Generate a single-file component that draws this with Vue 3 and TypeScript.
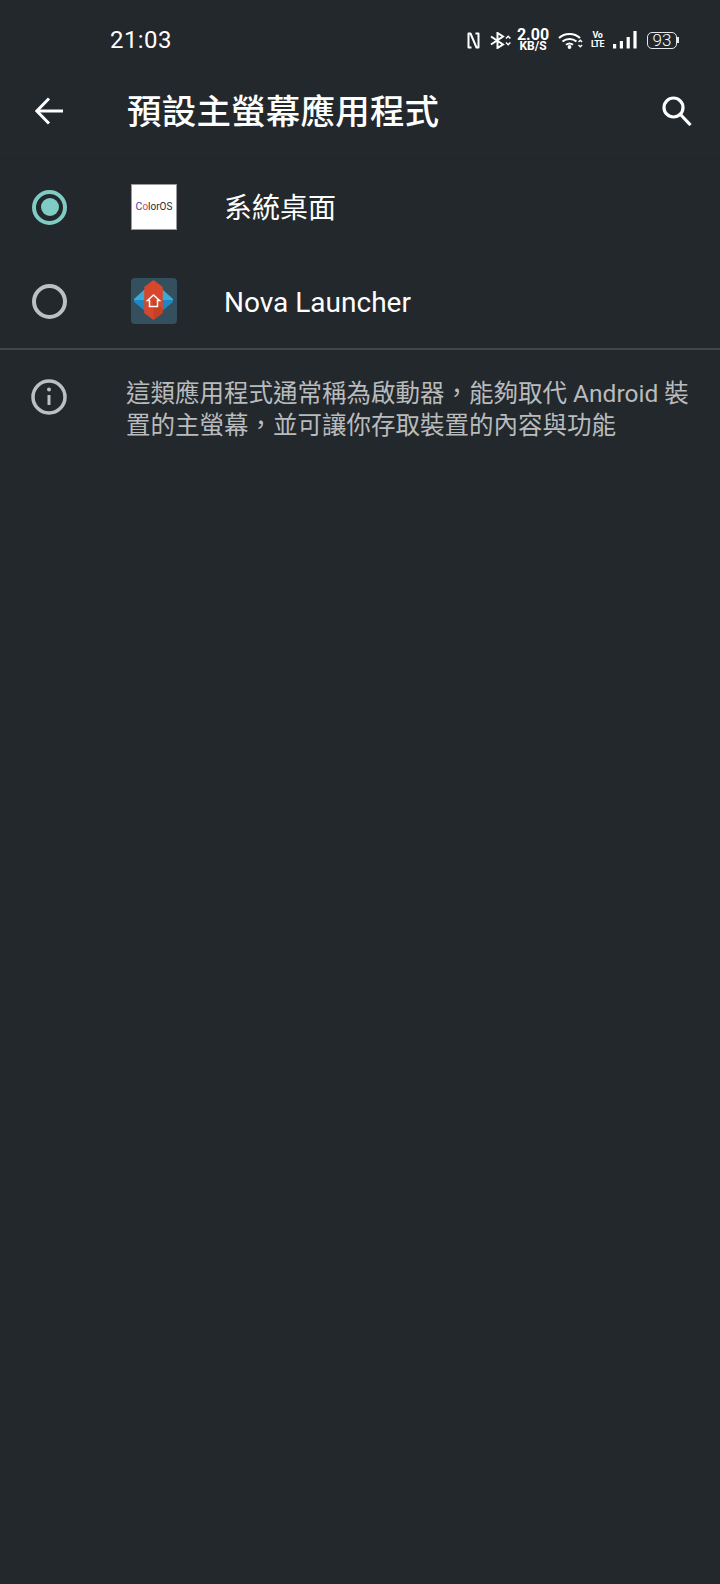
<script setup lang="ts">
const apps = [
	{ name: "系統桌面", selected: true, kind: "coloros" },
	{ name: "Nova Launcher", selected: false, kind: "nova" },
];
</script>

<template>
	<div class="screen">
		<div class="status">
			<span class="time">21:03</span>
			<div class="status-icons">
				<svg class="ic-nfc" width="13" height="17" viewBox="0 0 13 17" fill="none" stroke="#fff" stroke-width="2" stroke-linejoin="round">
					<path d="M4.500 15.500H1.500V1.500H3.500L9.500 15.500H11.500V1.500H8.500" />
				</svg>
				<svg class="ic-bt" width="21" height="17" viewBox="0 0 21 17" fill="none" stroke="#fff" stroke-width="2">
					<path d="M1 4.500l12 8-5.500 3.500V1L13 4.500l-12 8" />
					<path d="M16 6.500l2.200-2.200 2.200 2.200M16 10.500l2.200 2.200 2.200-2.200" stroke-width="1.500" />
				</svg>
				<div class="speed">
					<span class="speed-num">2.00</span>
					<span class="speed-unit">KB/S</span>
				</div>
				<svg class="ic-wifi" width="25" height="17" viewBox="0 0 25 17" fill="none" stroke="#fff" stroke-width="2">
					<path d="M1 6C6.500.5 16.500.5 22 6" />
					<path d="M4.500 9.500c4-3.500 10-3.500 14 0" />
					<path d="M8 12.800c2.300-1.700 4.700-1.700 7 0" />
					<circle cx="11.500" cy="15" r="1.900" fill="#fff" stroke="none" />
					<path d="M20.500 10l1.800-1.800L24.100 10M20.500 13l1.800 1.800L24.100 13" stroke-width="1.400" />
				</svg>
				<div class="volte">
					<span>Vo</span>
					<span>LTE</span>
				</div>
				<svg class="ic-signal" width="24" height="18" viewBox="0 0 24 18" fill="#fff">
					<rect x="0" y="13" width="3.200" height="4.500" />
					<rect x="6.800" y="10" width="3.200" height="7.500" />
					<rect x="13.600" y="6" width="3.200" height="11.500" />
					<rect x="20.400" y="0" width="3.200" height="17.500" />
				</svg>
				<div class="battery">
					<div class="battery-body">93</div>
					<div class="battery-tip"></div>
				</div>
			</div>
		</div>

		<header class="appbar">
			<svg class="back" width="28" height="28" viewBox="0 0 28 28" fill="none" stroke="#fff" stroke-width="3">
				<path d="M28 14H2" />
				<path d="M14 1.500L1.800 14 14 26.500" />
			</svg>
			<h1 class="title">預設主螢幕應用程式</h1>
			<svg class="search" width="30" height="30" viewBox="0 0 30 30" fill="none" stroke="#fff" stroke-width="3.200">
				<circle cx="11.500" cy="11.500" r="9.500" />
				<path d="M18 18l10.500 11" />
			</svg>
		</header>

		<div class="list">
			<div v-for="app in apps" :key="app.name" class="row">
				<div class="radio" :class="{ on: app.selected }">
					<div v-if="app.selected" class="dot"></div>
				</div>
				<div v-if="app.kind === 'coloros'" class="coloros">
					<span class="c1">C</span><span class="c2">o</span>lorOS
				</div>
				<svg v-else class="nova" width="46" height="46" viewBox="0 0 46 46">
					<rect width="46" height="46" rx="4" fill="#34505e" />
					<path d="M3 21l11-10v11H3z" fill="#3aa9dc" />
					<path d="M3 22h11v11L3 24z" fill="#1f86c2" />
					<path d="M42 21L31 11v11h11z" fill="#3aa9dc" />
					<path d="M42 22H31v11l11-9z" fill="#1f86c2" />
					<path d="M22.500 2l9.300 7v26l-9.300 7-9.300-7V9z" fill="#d6472b" />
					<path d="M22.500 22l9.300 9v4l-9.300 7z" fill="#b83a22" opacity="0.5" />
					<path d="M22.500 17l-6 5.500h2v6h8v-6h2z" fill="none" stroke="#fff" stroke-width="1.500" />
				</svg>
				<span class="name" :class="app.kind === 'coloros' ? 'name-cjk' : 'name-latin'">{{ app.name }}</span>
			</div>
		</div>

		<div class="info">
			<svg class="info-icon" width="36" height="36" viewBox="0 0 36 36" fill="none" stroke="#bdbfc0" stroke-width="3.500">
				<circle cx="18" cy="18" r="16" />
				<path d="M18 16v10" stroke-width="3" />
				<circle cx="18" cy="10.500" r="2" fill="#bdbfc0" stroke="none" />
			</svg>
			<p class="info-text">這類應用程式通常稱為啟動器，能夠取代 Android 裝置的主螢幕，並可讓你存取裝置的內容與功能</p>
		</div>
	</div>
</template>

<style>
	html,
	body {
		margin: 0;
		background: #22282c;
	}
</style>

<style scoped>
	.screen {
		width: 720px;
		height: 1584px;
		overflow: hidden;
		background: #22282c;
		color: #fff;
		font-family: Roboto, "Noto Sans CJK TC", sans-serif;
	}

	.status {
		height: 70px;
		box-sizing: border-box;
		padding: 10px 41px 0 110px;
		display: flex;
		align-items: center;
		justify-content: space-between;
	}

	.time {
		margin-bottom: 1px;
		font-size: 24px;
		letter-spacing: 0.4px;
	}

	.status-icons {
		display: flex;
		align-items: center;
	}

	.ic-nfc {
		margin-right: 10px;
	}

	.ic-bt {
		margin-right: 7px;
	}

	.speed {
		width: 30px;
		display: flex;
		flex-direction: column;
		align-items: center;
		font-weight: 700;
	}

	.speed-num {
		font-size: 16px;
		line-height: 13px;
	}

	.speed-unit {
		font-size: 12px;
		line-height: 11px;
	}

	.ic-wifi {
		margin-left: 10px;
	}

	.volte {
		width: 13px;
		margin-left: 8px;
		display: flex;
		flex-direction: column;
		align-items: center;
		font-size: 9px;
		font-weight: 700;
		line-height: 9.500px;
		letter-spacing: -0.500px;
	}

	.ic-signal {
		margin-left: 9px;
	}

	.battery {
		margin-left: 10px;
		display: flex;
		align-items: center;
	}

	.battery-body {
		width: 30px;
		height: 17px;
		box-sizing: border-box;
		border: 1.500px solid #e6e7e8;
		border-radius: 5px;
		font-size: 17px;
		font-weight: 300;
		line-height: 14px;
		text-align: center;
	}

	.battery-tip {
		width: 2px;
		height: 6px;
		background: #e6e7e8;
	}

	.appbar {
		height: 90px;
		box-sizing: border-box;
		padding: 0 28px 8px 35px;
		display: flex;
		align-items: center;
		border-bottom: 1px solid #20262a;
	}

	.title {
		margin: 0 0 4px 64px;
		flex: 1;
		font-size: 34.500px;
		font-weight: 500;
		letter-spacing: 0.200px;
	}

	.list {
		border-bottom: 2px solid #3f4548;
	}

	.row {
		height: 94px;
		padding-left: 32px;
		display: flex;
		align-items: center;
	}

	.radio {
		width: 35px;
		height: 35px;
		box-sizing: border-box;
		border: 4px solid #bdbfc0;
		border-radius: 50%;
		display: flex;
		align-items: center;
		justify-content: center;
	}

	.radio.on {
		border-color: #80cbc4;
	}

	.dot {
		width: 18px;
		height: 18px;
		border-radius: 50%;
		background: #80cbc4;
	}

	.coloros {
		width: 46px;
		height: 46px;
		margin-left: 64px;
		box-sizing: border-box;
		border: 1px solid #9a9a9c;
		background: #fff;
		color: #2a2a30;
		font-size: 10px;
		line-height: 44px;
		text-align: center;
	}

	.c1 {
		font-size: 10.500px;
		color: #4b3f9e;
	}

	.c2 {
		color: #d9406f;
	}

	.nova {
		margin-left: 64px;
	}

	.name {
		margin-left: 47px;
		font-size: 28px;
	}

	.name-cjk {
		margin-bottom: 2px;
	}

	.name-latin {
		margin-top: 2px;
	}

	.info {
		padding: 29px 28px 0 31px;
		display: flex;
		align-items: flex-start;
	}

	.info-icon {
		flex: none;
	}

	.info-text {
		margin: -1px 0 0 59px;
		font-size: 24.500px;
		line-height: 32px;
		color: #b9bbbd;
	}
</style>
